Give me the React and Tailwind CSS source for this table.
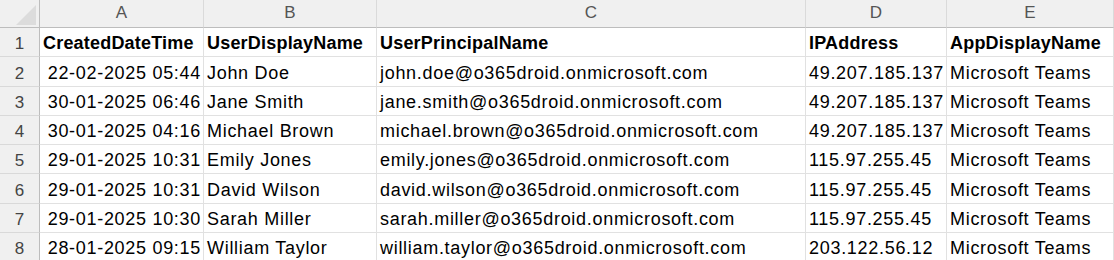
import React from "react";

const columns = [
  { letter: "A", width: "w-[164px]" },
  { letter: "B", width: "w-[173px]" },
  { letter: "C", width: "w-[429px]" },
  { letter: "D", width: "w-[141px]" },
  { letter: "E", width: "w-[167px]" },
];

const headers = [
  "CreatedDateTime",
  "UserDisplayName",
  "UserPrincipalName",
  "IPAddress",
  "AppDisplayName",
];

const rows = [
  ["22-02-2025 05:44", "John Doe", "john.doe@o365droid.onmicrosoft.com", "49.207.185.137", "Microsoft Teams"],
  ["30-01-2025 06:46", "Jane Smith", "jane.smith@o365droid.onmicrosoft.com", "49.207.185.137", "Microsoft Teams"],
  ["30-01-2025 04:16", "Michael Brown", "michael.brown@o365droid.onmicrosoft.com", "49.207.185.137", "Microsoft Teams"],
  ["29-01-2025 10:31", "Emily Jones", "emily.jones@o365droid.onmicrosoft.com", "115.97.255.45", "Microsoft Teams"],
  ["29-01-2025 10:31", "David Wilson", "david.wilson@o365droid.onmicrosoft.com", "115.97.255.45", "Microsoft Teams"],
  ["29-01-2025 10:30", "Sarah Miller", "sarah.miller@o365droid.onmicrosoft.com", "115.97.255.45", "Microsoft Teams"],
  ["28-01-2025 09:15", "William Taylor", "william.taylor@o365droid.onmicrosoft.com", "203.122.56.12", "Microsoft Teams"],
];

const Cell = ({ children, width, right, bold }) => (
  <div
    className={`${width} h-full shrink-0 border-r border-b border-[#e1e1e1] flex items-end pb-[4px] overflow-hidden whitespace-nowrap ${
      right ? "justify-end pr-[2px]" : "pl-[3px]"
    } ${bold ? "font-bold tracking-[0.2px]" : "tracking-[0.7px]"}`}
  >
    {children}
  </div>
);

const RowNum = ({ n }) => (
  <div className="w-[40px] h-full shrink-0 bg-[#f0f0f0] border-r border-b border-r-[#bdbdbd] border-b-[#d9d9d9] flex items-end justify-center pb-[4px] text-[#444] text-[17px]">
    {n}
  </div>
);

export default function App() {
  return (
    <div
      className="w-[1114px] h-[260px] overflow-hidden bg-white text-black text-[18px] leading-none"
      style={{ fontFamily: '"Liberation Sans", Arial, sans-serif' }}
    >
      {/* -----------------column letters----------------- */}
      <div className="flex h-[28px]">
        <div className="w-[40px] shrink-0 bg-[#f0f0f0] border-r border-b border-r-[#bdbdbd] border-b-[#bdbdbd] relative">
          <svg className="absolute left-[16px] top-[5px]" width="21" height="20" viewBox="0 0 21 20">
            <polygon points="20,0 20,20 0,20" fill="#dcdcdc" />
          </svg>
        </div>
        {columns.map((col) => (
          <div
            key={col.letter}
            className={`${col.width} shrink-0 bg-[#f0f0f0] border-r border-b border-r-[#dadada] border-b-[#bdbdbd] flex items-end justify-center pb-[6px] text-[#555] text-[17px]`}
          >
            {col.letter}
          </div>
        ))}
      </div>

      {/* -----------------header row----------------- */}
      <div className="flex h-[29.3px]">
        <RowNum n={1} />
        {headers.map((h, i) => (
          <Cell key={h} width={columns[i].width} bold>
            {h}
          </Cell>
        ))}
      </div>

      {/* -----------------data rows----------------- */}
      {rows.map((row, r) => (
        <div key={r} className="flex h-[29.3px]">
          <RowNum n={r + 2} />
          {row.map((value, i) => (
            <Cell key={i} width={columns[i].width} right={i === 0}>
              {value}
            </Cell>
          ))}
        </div>
      ))}
    </div>
  );
}
